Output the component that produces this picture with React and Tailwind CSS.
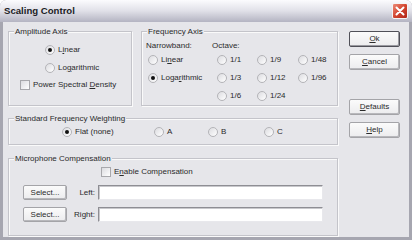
import React from "react";

const F = { fontFamily: '"Liberation Sans", Arial, sans-serif' };

function U({ children }) {
  return <span className="underline underline-offset-[1px]">{children}</span>;
}

function Radio({ checked, children, className = "" }) {
  return (
    <div className={"flex items-center h-[18px] " + className}>
      <span className="w-[10px] h-[10px] rounded-full border border-[#b4b4b8] bg-gradient-to-br from-[#dcdce0] to-white flex items-center justify-center shrink-0">
        {checked && <span className="w-[4px] h-[4px] rounded-full bg-[#111]" />}
      </span>
      <span className="ml-[3px] text-[8px] text-[#2a2a2a] leading-none whitespace-nowrap">{children}</span>
    </div>
  );
}

function Check({ children, className = "" }) {
  return (
    <div className={"flex items-center " + className}>
      <span className="w-[10px] h-[10px] border border-[#a8a8ac] bg-gradient-to-br from-[#dcdce0] to-white shrink-0" />
      <span className="ml-[3px] text-[8px] text-[#2a2a2a] leading-none whitespace-nowrap">{children}</span>
    </div>
  );
}

function Group({ label, className = "", children }) {
  return (
    <div className={"relative border border-[#c4c4ca] shadow-[inset_1px_1px_0_#fafafa,1px_1px_0_#fafafa] " + className}>
      <span className="absolute -top-[6px] left-[5px] px-[1px] bg-[#e6e6ea] text-[8px] leading-[11px] text-[#2a2a2a] whitespace-nowrap">
        {label}
      </span>
      {children}
    </div>
  );
}

function Btn({ children, def, className = "" }) {
  return (
    <div
      className={
        "flex items-center justify-center rounded-[2px] bg-gradient-to-b from-[#fbfbfb] to-[#ececee] text-[8px] text-[#2a2a2a] leading-none " +
        (def
          ? "border border-[#505058] shadow-[inset_-1px_-1px_0_#9a9aa0]"
          : "border border-[#a4a4a8] shadow-[inset_-1px_-1px_0_#b8b8bc]") +
        " " +
        className
      }
    >
      {children}
    </div>
  );
}

function Input({ className = "" }) {
  return (
    <div
      className={
        "bg-white border-t border-l border-[#8e8e94] border-r-[#e8e8ec] border-b-[#e8e8ec] border-r border-b shadow-[inset_1px_1px_0_#c8c8cc] " +
        className
      }
    />
  );
}

export default function App() {
  return (
    <div style={F} className="w-[412px] h-[240px] flex flex-col bg-[#a6a6b0] rounded-t-[6px] overflow-hidden">
      {/* Title bar */}
      <div className="h-[22px] flex items-center justify-between bg-gradient-to-b from-[#fcfcfe] via-[#e0e0e8] to-[#b4b4c2] pl-[4px] pr-[3px]">
        <span className="text-[9.6px] font-bold text-[#1c1c24]">Scaling Control</span>
        <div className="w-[16px] h-[16px] rounded-[2px] bg-gradient-to-br from-[#ec8a78] via-[#d2442e] to-[#b0261a] border border-[#f4f4f4] flex items-center justify-center mr-[1px]">
          <svg width="10" height="10" viewBox="0 0 10 10">
            <path d="M1.5 1.5 L8.5 8.5 M8.5 1.5 L1.5 8.5" stroke="#fff" strokeWidth="2" strokeLinecap="round" />
          </svg>
        </div>
      </div>

      {/* Body */}
      <div className="flex-1 mx-[3px] mb-[3px] bg-[#e6e6ea] flex pl-[5px]">
        {/* Left column */}
        <div className="w-[330px] pt-[9px] flex flex-col">
          <div className="flex gap-[9px]">
            <Group label="Amplitude Axis" className="w-[124px] h-[75px]">
              <div className="pt-[9px] pl-[36px]">
                <Radio checked>
                  L<U>i</U>near
                </Radio>
                <Radio>
                  Lo<U>g</U>arithmic
                </Radio>
              </div>
              <Check className="ml-[11px] mt-[3px]">
                Power Spectral <U>D</U>ensity
              </Check>
            </Group>
            <Group label="Frequency Axis" className="w-[197px] h-[75px]">
              <div className="pt-[8px] pl-[4px] grid grid-cols-[66px_40px_41px_40px]">
                <div className="text-[8px] leading-[11px] text-[#2a2a2a]">Narrowband:</div>
                <div className="col-span-3 text-[8px] leading-[11px] text-[#2a2a2a]">Octave:</div>
                <Radio className="ml-[2px]">
                  Li<U>n</U>ear
                </Radio>
                <Radio className="ml-[5px]">1/1</Radio>
                <Radio className="ml-[5px]">1/9</Radio>
                <Radio className="ml-[5px]">1/48</Radio>
                <Radio checked className="ml-[2px]">
                  Loga<U>r</U>ithmic
                </Radio>
                <Radio className="ml-[5px]">1/3</Radio>
                <Radio className="ml-[5px]">1/12</Radio>
                <Radio className="ml-[5px]">1/96</Radio>
                <div />
                <Radio className="ml-[5px]">1/6</Radio>
                <Radio className="ml-[5px]">1/24</Radio>
              </div>
            </Group>
          </div>

          <Group label="Standard Frequency Weighting" className="mt-[12px] h-[27px] w-[330px]">
            <div className="flex pl-[53px] pt-[4px]">
              <Radio checked className="w-[92px]">Flat (none)</Radio>
              <Radio className="w-[54px]">A</Radio>
              <Radio className="w-[56px]">B</Radio>
              <Radio>C</Radio>
            </div>
          </Group>

          <Group label="Microphone Compensation" className="mt-[13px] h-[78px] w-[330px]">
            <Check className="ml-[92px] mt-[8px]">
              E<U>n</U>able Compensation
            </Check>
            <div className="flex items-center mt-[8px] pl-[14px]">
              <Btn className="w-[44px] h-[15px]">Select...</Btn>
              <span className="w-[31px] text-right pr-[3px] text-[8px] text-[#2a2a2a]">Left:</span>
              <Input className="w-[225px] h-[15px]" />
            </div>
            <div className="flex items-center mt-[7px] pl-[14px]">
              <Btn className="w-[44px] h-[15px]">Select...</Btn>
              <span className="w-[31px] text-right pr-[3px] text-[8px] text-[#2a2a2a]">Right:</span>
              <Input className="w-[225px] h-[15px]" />
            </div>
          </Group>
        </div>

        {/* Right buttons */}
        <div className="ml-[11px] pt-[9px] flex flex-col w-[51px]">
          <Btn def className="h-[16px]">
            <U>O</U>k
          </Btn>
          <Btn className="h-[16px] mt-[7px]">
            <U>C</U>ancel
          </Btn>
          <Btn className="h-[16px] mt-[29px]">
            <U>D</U>efaults
          </Btn>
          <Btn className="h-[16px] mt-[7px]">
            <U>H</U>elp
          </Btn>
        </div>
      </div>
    </div>
  );
}
